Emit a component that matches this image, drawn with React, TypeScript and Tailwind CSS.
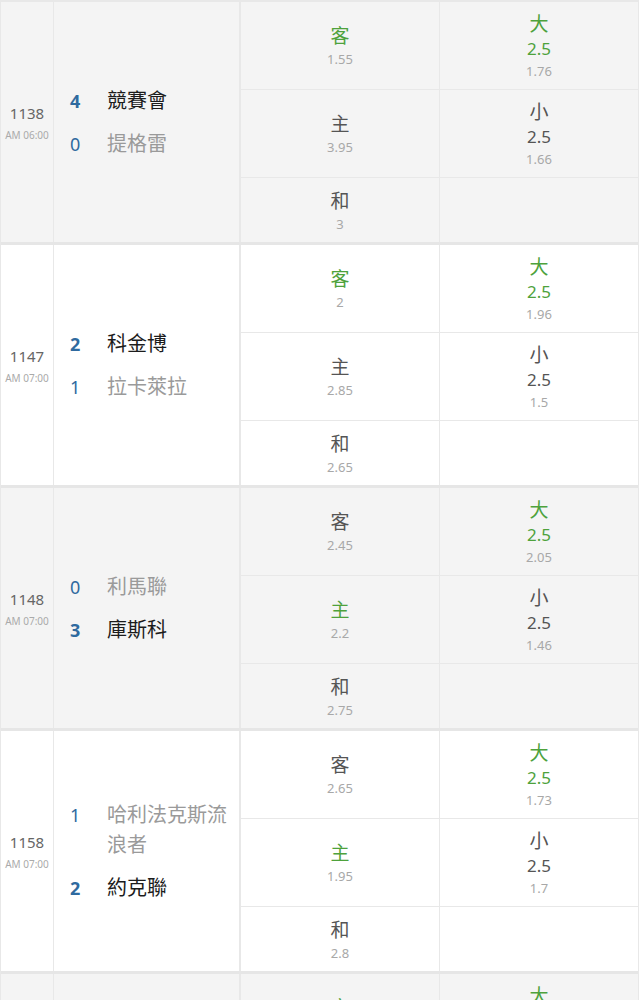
import clsx from 'clsx';

type Team = { score: number; name: string; win?: boolean };
type Match = {
  no: string;
  time: string;
  teams: Team[];
  away: string;
  home: string;
  draw: string;
  pick: 'away' | 'home' | 'draw';
  line: string;
  over: string;
  under: string;
};

const matches: Match[] = [
  {
    no: '1138',
    time: 'AM 06:00',
    teams: [
      { score: 4, name: '競賽會', win: true },
      { score: 0, name: '提格雷' },
    ],
    away: '1.55',
    home: '3.95',
    draw: '3',
    pick: 'away',
    line: '2.5',
    over: '1.76',
    under: '1.66',
  },
  {
    no: '1147',
    time: 'AM 07:00',
    teams: [
      { score: 2, name: '科金博', win: true },
      { score: 1, name: '拉卡萊拉' },
    ],
    away: '2',
    home: '2.85',
    draw: '2.65',
    pick: 'away',
    line: '2.5',
    over: '1.96',
    under: '1.5',
  },
  {
    no: '1148',
    time: 'AM 07:00',
    teams: [
      { score: 0, name: '利馬聯' },
      { score: 3, name: '庫斯科', win: true },
    ],
    away: '2.45',
    home: '2.2',
    draw: '2.75',
    pick: 'home',
    line: '2.5',
    over: '2.05',
    under: '1.46',
  },
  {
    no: '1158',
    time: 'AM 07:00',
    teams: [
      { score: 1, name: '哈利法克斯流浪者' },
      { score: 2, name: '約克聯', win: true },
    ],
    away: '2.65',
    home: '1.95',
    draw: '2.8',
    pick: 'home',
    line: '2.5',
    over: '1.73',
    under: '1.7',
  },
  {
    no: '1160',
    time: 'AM 08:00',
    teams: [
      { score: 3, name: '帕拉伊巴', win: true },
      { score: 1, name: '波塔弗戈' },
    ],
    away: '1.8',
    home: '3.3',
    draw: '3.1',
    pick: 'away',
    line: '2.5',
    over: '1.82',
    under: '1.6',
  },
];

const font = { fontFamily: '"Noto Sans", "Noto Sans CJK TC", sans-serif' };

// 1X2 格子
function ResultCell({ label, value, hit, className }: { label: string; value: string; hit: boolean; className?: string }) {
  return (
    <div className={clsx('flex flex-col items-center justify-center', className)}>
      <span className={clsx('text-[19px] leading-[27px]', hit ? 'text-[#4ea23c]' : 'text-[#555]')}>{label}</span>
      <span className="text-[13px] leading-[18px] text-[#a8a8a8]">{value}</span>
    </div>
  );
}

// 大小球格子
function TotalCell({ label, line, value, hit, className }: { label: string; line: string; value: string; hit: boolean; className?: string }) {
  return (
    <div className={clsx('flex flex-col items-center justify-center', className)}>
      <span className={clsx('text-[19px] leading-[26px]', hit ? 'text-[#4ea23c]' : 'text-[#555]')}>{label}</span>
      <span className={clsx('text-[17px] leading-[24px]', hit ? 'text-[#4ea23c]' : 'text-[#555]')}>{line}</span>
      <span className="text-[13px] leading-[20px] text-[#a8a8a8]">{value}</span>
    </div>
  );
}

function MatchRow({ m, shaded }: { m: Match; shaded: boolean }) {
  return (
    <div className={clsx('flex h-[243px] border-b-[3px] border-[#e6e6e6]', shaded ? 'bg-[#f4f4f4]' : 'bg-white')}>
      {/* 場次 */}
      <div className="flex w-[53px] shrink-0 flex-col items-center justify-center border-r border-[#e8e8e8]">
        <span className="text-[15px] leading-[26px] text-[#666]">{m.no}</span>
        <span className="text-[10px] leading-[18px] text-[#aaa]">{m.time}</span>
      </div>

      {/* 球隊 */}
      <div className="flex w-[187px] shrink-0 flex-col justify-center gap-[13px] border-r-2 border-[#e8e8e8] pl-[16px] pr-[6px]">
        {m.teams.map((t) => (
          <div key={t.name} className="flex items-start">
            <span
              className={clsx(
                'w-[37px] shrink-0 text-[18px] leading-[30px] text-[#2f6a9f]',
                t.win ? 'font-bold' : 'font-normal'
              )}
            >
              {t.score}
            </span>
            <span className={clsx('text-[20px] leading-[30px]', t.win ? 'text-[#1c1c1c]' : 'text-[#9a9a9a]')}>
              {t.name}
            </span>
          </div>
        ))}
      </div>

      {/* 主客和 */}
      <div className="flex flex-1 flex-col border-r border-[#e8e8e8]">
        <ResultCell label="客" value={m.away} hit={m.pick === 'away'} className="h-[88px] border-b border-[#e8e8e8]" />
        <ResultCell label="主" value={m.home} hit={m.pick === 'home'} className="h-[88px] border-b border-[#e8e8e8]" />
        <ResultCell label="和" value={m.draw} hit={m.pick === 'draw'} className="flex-1" />
      </div>

      {/* 大小 */}
      <div className="flex flex-1 flex-col">
        <TotalCell label="大" line={m.line} value={m.over} hit className="h-[88px] border-b border-[#e8e8e8]" />
        <TotalCell label="小" line={m.line} value={m.under} hit={false} className="h-[88px] border-b border-[#e8e8e8]" />
        <div className="flex-1" />
      </div>
    </div>
  );
}

export default function App() {
  return (
    <div className="min-h-screen w-full bg-white" style={font}>
      <div className="border-x border-t-2 border-[#e8e8e8]">
        {matches.map((m, i) => (
          <MatchRow key={m.no} m={m} shaded={i % 2 === 0} />
        ))}
      </div>
    </div>
  );
}
